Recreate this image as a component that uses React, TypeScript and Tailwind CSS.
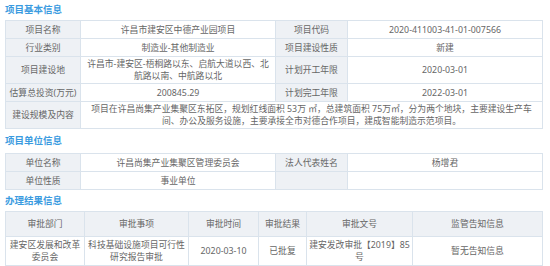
import React from 'react';

const font = { fontFamily: '"Noto Sans", "Noto Sans CJK SC", sans-serif' };

type Pair = [string, React.ReactNode];

const basicRows: [Pair, Pair][] = [
  [['项目名称', '许昌市建安区中德产业园项目'], ['项目代码', '2020-411003-41-01-007566']],
  [['行业类别', '制造业-其他制造业'], ['项目建设性质', '新建']],
  [['项目建设地', '许昌市-建安区-梧桐路以东、启航大道以西、北航路以南、中航路以北'], ['计划开工年限', '2020-03-01']],
  [['估算总投资(万元)', '200845.29'], ['计划完工年限', '2022-03-01']],
];

const unitRows: [Pair, Pair][] = [
  [['单位名称', '许昌尚集产业集聚区管理委员会'], ['法人代表姓名', '杨增君']],
  [['单位性质', '事业单位'], ['', '']],
];

const resultHead = ['审批部门', '审批事项', '审批时间', '审批结果', '审批文号', '监管告知信息'];

const label = 'border border-[#dae3ec] bg-[#eef1f5] text-center px-[2px] py-[1px] align-middle';
const value = 'border border-[#dae3ec] bg-white text-center px-[3px] py-[1px] align-middle';
const cell = 'border border-[#dae3ec] bg-white text-center px-px py-[1px] align-middle';

function Heading({ title, h }: { title: string; h: string }) {
  return <div className={h + ' flex items-center px-[5px] text-[9.5px] font-bold text-[#3a9be0]'}>{title}</div>;
}

function Cols() {
  return (
    <colgroup>
      <col className="w-[75px]" />
      <col className="w-[195px]" />
      <col className="w-[72px]" />
      <col className="w-[195px]" />
    </colgroup>
  );
}

export default function App() {
  return (
    <div className="w-[550px] h-[266px] bg-white text-[8.8px] leading-[12px] text-[#666] overflow-hidden" style={font}>
      <Heading title="项目基本信息" h="h-[20px]" />
      <div className="px-[5px]">
        <table className="w-[537px] table-fixed border-collapse">
          <Cols />
          <tbody>
            {basicRows.map((r, i) => (
              <tr key={i} className="h-[18px]">
                <td className={label}>{r[0][0]}</td>
                <td className={value}>{r[0][1]}</td>
                <td className={label}>{r[1][0]}</td>
                <td className={value}>{r[1][1]}</td>
              </tr>
            ))}
            <tr className="h-[27px]">
              <td className={label}>建设规模及内容</td>
              <td className={value} colSpan={3}>
                项目在许昌尚集产业集聚区东拓区，规划红线面积 53万 ㎡，总建筑面积 75万㎡，分为两个地块，主要建设生产车间、办公及服务设施，主要承接全市对德合作项目，建成智能制造示范项目。
              </td>
            </tr>
          </tbody>
        </table>
      </div>
      <Heading title="项目单位信息" h="h-[24px]" />
      <div className="px-[5px]">
        <table className="w-[537px] table-fixed border-collapse">
          <Cols />
          <tbody>
            {unitRows.map((r, i) => (
              <tr key={i} className="h-[18px]">
                <td className={label}>{r[0][0]}</td>
                <td className={value}>{r[0][1]}</td>
                <td className={label}>{r[1][0]}</td>
                <td className={value}>{r[1][1]}</td>
              </tr>
            ))}
          </tbody>
        </table>
      </div>
      <Heading title="办理结果信息" h="h-[21px]" />
      <div className="px-[5px]">
        <table className="w-[537px] table-fixed border-collapse">
          <colgroup>
            <col className="w-[79px]" />
            <col className="w-[104px]" />
            <col className="w-[70px]" />
            <col className="w-[48px]" />
            <col className="w-[106px]" />
            <col className="w-[130px]" />
          </colgroup>
          <thead>
            <tr className="h-[25px]">
              {resultHead.map((h) => (
                <th key={h} className={label + ' font-normal'}>{h}</th>
              ))}
            </tr>
          </thead>
          <tbody>
            <tr className="h-[29px]">
              <td className={cell}>建安区发展和改革委员会</td>
              <td className={cell}>科技基础设施项目可行性研究报告审批</td>
              <td className={cell}>2020-03-10</td>
              <td className={cell}>已批复</td>
              <td className={cell}>
                <span className="block">建安发改审批【2019】85</span>
                <span className="block">号</span>
              </td>
              <td className={cell}>暂无告知信息</td>
            </tr>
          </tbody>
        </table>
      </div>
    </div>
  );
}
